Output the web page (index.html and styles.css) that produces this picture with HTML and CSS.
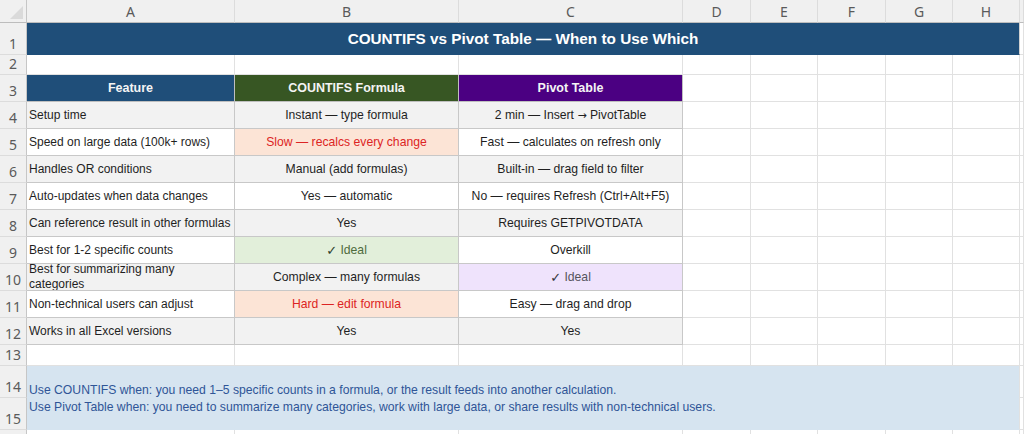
FILE: index.html
```html
<!DOCTYPE html>
<html lang="en">
<head>
<meta charset="utf-8">
<title>COUNTIFS vs Pivot Table</title>
<link rel="stylesheet" href="styles.css">
</head>
<body>
<div class="sheet">
  <!-- column headers -->
  <div class="corner"><span class="tri"></span></div>
  <div class="ch">A</div><div class="ch">B</div><div class="ch">C</div><div class="ch">D</div><div class="ch">E</div><div class="ch">F</div><div class="ch">G</div><div class="ch">H</div><div class="ch"></div>

  <!-- row 1 -->
  <div class="rh">1</div>
  <div class="c title">COUNTIFS vs Pivot Table — When to Use Which</div>
  <div class="c"></div>

  <!-- row 2 -->
  <div class="rh">2</div>
  <div class="c"></div><div class="c"></div><div class="c"></div><div class="c"></div><div class="c"></div><div class="c"></div><div class="c"></div><div class="c"></div><div class="c"></div>

  <!-- row 3 -->
  <div class="rh">3</div>
  <div class="c t hd hd-blue">Feature</div>
  <div class="c t hd hd-green">COUNTIFS Formula</div>
  <div class="c t hd hd-purple">Pivot Table</div>
  <div class="c"></div><div class="c"></div><div class="c"></div><div class="c"></div><div class="c"></div><div class="c"></div>

  <!-- row 4 -->
  <div class="rh">4</div>
  <div class="c t lab gray">Setup time</div>
  <div class="c t val gray">Instant — type formula</div>
  <div class="c t val gray">2 min — Insert&nbsp;<span class="sym">→</span>&nbsp;PivotTable</div>
  <div class="c"></div><div class="c"></div><div class="c"></div><div class="c"></div><div class="c"></div><div class="c"></div>

  <!-- row 5 -->
  <div class="rh">5</div>
  <div class="c t lab">Speed on large data (100k+ rows)</div>
  <div class="c t val bad">Slow — recalcs every change</div>
  <div class="c t val">Fast — calculates on refresh only</div>
  <div class="c"></div><div class="c"></div><div class="c"></div><div class="c"></div><div class="c"></div><div class="c"></div>

  <!-- row 6 -->
  <div class="rh">6</div>
  <div class="c t lab gray">Handles OR conditions</div>
  <div class="c t val gray">Manual (add formulas)</div>
  <div class="c t val gray">Built-in — drag field to filter</div>
  <div class="c"></div><div class="c"></div><div class="c"></div><div class="c"></div><div class="c"></div><div class="c"></div>

  <!-- row 7 -->
  <div class="rh">7</div>
  <div class="c t lab">Auto-updates when data changes</div>
  <div class="c t val">Yes — automatic</div>
  <div class="c t val">No — requires Refresh (Ctrl+Alt+F5)</div>
  <div class="c"></div><div class="c"></div><div class="c"></div><div class="c"></div><div class="c"></div><div class="c"></div>

  <!-- row 8 -->
  <div class="rh">8</div>
  <div class="c t lab gray">Can reference result in other formulas</div>
  <div class="c t val gray">Yes</div>
  <div class="c t val gray">Requires GETPIVOTDATA</div>
  <div class="c"></div><div class="c"></div><div class="c"></div><div class="c"></div><div class="c"></div><div class="c"></div>

  <!-- row 9 -->
  <div class="rh">9</div>
  <div class="c t lab">Best for 1-2 specific counts</div>
  <div class="c t val good"><span class="chk">✓</span>&nbsp;Ideal</div>
  <div class="c t val">Overkill</div>
  <div class="c"></div><div class="c"></div><div class="c"></div><div class="c"></div><div class="c"></div><div class="c"></div>

  <!-- row 10 -->
  <div class="rh">10</div>
  <div class="c t lab gray wrap"><span class="wraptext">Best for summarizing many categories</span></div>
  <div class="c t val gray">Complex — many formulas</div>
  <div class="c t val pgood"><span class="chk">✓</span>&nbsp;Ideal</div>
  <div class="c"></div><div class="c"></div><div class="c"></div><div class="c"></div><div class="c"></div><div class="c"></div>

  <!-- row 11 -->
  <div class="rh">11</div>
  <div class="c t lab">Non-technical users can adjust</div>
  <div class="c t val bad">Hard — edit formula</div>
  <div class="c t val">Easy — drag and drop</div>
  <div class="c"></div><div class="c"></div><div class="c"></div><div class="c"></div><div class="c"></div><div class="c"></div>

  <!-- row 12 -->
  <div class="rh">12</div>
  <div class="c t lab gray">Works in all Excel versions</div>
  <div class="c t val gray">Yes</div>
  <div class="c t val gray">Yes</div>
  <div class="c"></div><div class="c"></div><div class="c"></div><div class="c"></div><div class="c"></div><div class="c"></div>

  <!-- row 13 -->
  <div class="rh">13</div>
  <div class="c"></div><div class="c"></div><div class="c"></div><div class="c"></div><div class="c"></div><div class="c"></div><div class="c"></div><div class="c"></div><div class="c"></div>

  <!-- rows 14-15 -->
  <div class="rh">14</div>
  <div class="c note">
    <span>Use COUNTIFS when: you need 1–5 specific counts in a formula, or the result feeds into another calculation.</span>
    <span>Use Pivot Table when: you need to summarize many categories, work with large data, or share results with non-technical users.</span>
  </div>
  <div class="c"></div>
  <div class="rh">15</div>
  <div class="c"></div>

  <!-- row 16 -->
  <div class="rh"></div>
  <div class="c"></div><div class="c"></div><div class="c"></div><div class="c"></div><div class="c"></div><div class="c"></div><div class="c"></div><div class="c"></div><div class="c"></div>
</div>
</body>
</html>
```

FILE: styles.css
```css
html, body {
  margin: 0;
  padding: 0;
  background: #ffffff;
}

body {
  font-family: "Liberation Sans", Arial, sans-serif;
  color: #1f1f1f;
  overflow: hidden;
}

.sheet {
  display: grid;
  grid-template-columns: 27px 208px 224px 224px 68px 67px 68px 67px 67px 1fr;
  grid-template-rows: 23px 32px 20px 27px repeat(9, 27px) 21px 32px 32px 30px;
  width: 1024px;
  height: 434px;
  overflow: hidden;
}

.corner {
  position: relative;
  background: #f0f0f0;
  border-right: 1px solid #c6c6c6;
  border-bottom: 1px solid #bdbdbd;
  box-sizing: border-box;
}

.tri {
  position: absolute;
  right: 3px;
  bottom: 3px;
  width: 0;
  height: 0;
  border-left: 13px solid transparent;
  border-bottom: 13px solid #dadada;
}

.ch {
  background: #f0f0f0;
  border-right: 1px solid #dcdcdc;
  border-bottom: 1px solid #bdbdbd;
  box-sizing: border-box;
  display: flex;
  align-items: center;
  justify-content: center;
  padding-top: 1px;
  font-family: "Noto Sans", "Open Sans", sans-serif;
  font-size: 14px;
  color: #5a5a5a;
}

.rh {
  background: #f0f0f0;
  border-right: 1px solid #c6c6c6;
  border-bottom: 1px solid #dcdcdc;
  box-sizing: border-box;
  display: flex;
  align-items: flex-end;
  justify-content: center;
  padding-bottom: 1px;
  font-family: "Noto Sans", "Open Sans", sans-serif;
  font-size: 14px;
  line-height: 18px;
  color: #5a5a5a;
}

.c {
  border-right: 1px solid #e1e1e1;
  border-bottom: 1px solid #e1e1e1;
  box-sizing: border-box;
  min-width: 0;
  overflow: hidden;
}

.t {
  display: flex;
  align-items: center;
  font-size: 12.2px;
  line-height: 15px;
  white-space: nowrap;
  border-color: #c8c8c8;
  background: #ffffff;
}

.lab {
  padding-left: 2px;
  font-size: 12px;
}

.val {
  justify-content: center;
}

.wrap {
  white-space: normal;
}

.wraptext {
  display: block;
  max-width: 190px;
}

.sym {
  font-family: "DejaVu Sans", sans-serif;
  font-size: 11px;
}

.chk {
  font-family: "DejaVu Sans", sans-serif;
  font-size: 13px;
  color: #2f3f2a;
}

.gray { background: #f2f2f2; }

.bad {
  background: #fce4d6;
  color: #dc2424;
}

.good {
  background: #e2efda;
  color: #4e6b3c;
}

.pgood {
  background: #efe3fc;
  color: #55555d;
}

.pgood .chk {
  color: #333338;
}

.title {
  grid-column: span 8;
  background: #1f4e79;
  border-right-color: #d0d0d0;
  border-bottom-color: #1f4e79;
  color: #ffffff;
  font-weight: bold;
  font-size: 15.3px;
  display: flex;
  align-items: center;
  justify-content: center;
  white-space: nowrap;
}

.hd {
  justify-content: center;
  font-weight: bold;
  font-size: 12.5px;
  color: #f4f4f4;
  border-color: #bfbfbf;
}

.hd-blue { background: #1f4e79; }
.hd-green { background: #375623; }
.hd-purple { background: #4b0082; }

.note {
  grid-column: span 8;
  grid-row: span 2;
  background: #d6e4f0;
  border-bottom-color: #d6e4f0;
  border-right-color: #e1e1e1;
  display: flex;
  flex-direction: column;
  justify-content: center;
  padding-left: 2px;
  padding-top: 2px;
  font-size: 12.2px;
  line-height: 17px;
  color: #2f5597;
  white-space: nowrap;
}
```
